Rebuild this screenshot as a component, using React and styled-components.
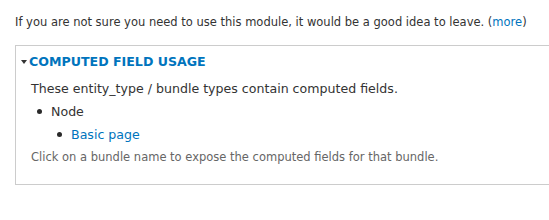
import React from 'react';
import styled, { createGlobalStyle } from 'styled-components';

const GlobalStyle = createGlobalStyle`
  html, body {
    margin: 0;
    padding: 0;
    background: #fff;
    overflow: hidden;
  }
  body {
    font-family: "DejaVu Sans", Verdana, sans-serif;
    font-size: 12.6px;
    color: #333;
  }
`;

const Page = styled.div`
  padding: 13px 0 0 15px;
`;

const Help = styled.p`
  margin: 0 0 14px;
  font-size: 11.5px;
  line-height: 18px;
`;

const Link = styled.a`
  color: #0074bd;
  text-decoration: none;
`;

const Fieldset = styled.section`
  width: 560px;
  border: 1px solid #ccc;
  border-right: none;
  padding: 6px 0 16px 15px;
`;

const Legend = styled.div`
  display: flex;
  align-items: center;
  gap: 1px;
  margin-left: -10px;
  font-weight: bold;
  text-transform: uppercase;
  color: #0074bd;
  line-height: 20px;
`;

const Arrow = styled.span`
  width: 0;
  height: 0;
  border-left: 3px solid transparent;
  border-right: 3px solid transparent;
  border-top: 4px solid #333;
  margin-right: 1px;
`;

const Body = styled.div`
  padding-top: 5px;
`;

const Text = styled.p`
  margin: 0;
  line-height: 23px;
`;

const List = styled.ul`
  margin: 0;
  padding-left: ${p => p.$indent}px;
  list-style: none;
  line-height: 23px;
`;

const Item = styled.div`
  display: flex;
  align-items: center;

  &::before {
    content: "";
    width: 5px;
    height: 5px;
    border-radius: 50%;
    background: #2a2a2a;
    margin: -1px 9px 0 0;
  }
`;

const Note = styled.p`
  margin: 0;
  color: #666;
  font-size: 11.5px;
  line-height: 22px;
`;

export default function App() {
  return (
    <Page>
      <GlobalStyle />
      <Help>
        If you are not sure you need to use this module, it would be a good idea to leave. (<Link href="#">more</Link>)
      </Help>
      <Fieldset>
        <Legend>
          <Arrow />
          <Link href="#">Computed field usage</Link>
        </Legend>
        <Body>
          <Text>These entity_type / bundle types contain computed fields.</Text>
          <List $indent={6}>
            <li>
              <Item>Node</Item>
              <List $indent={20}>
                <li><Item><Link href="#">Basic page</Link></Item></li>
              </List>
            </li>
          </List>
          <Note>Click on a bundle name to expose the computed fields for that bundle.</Note>
        </Body>
      </Fieldset>
    </Page>
  );
}
